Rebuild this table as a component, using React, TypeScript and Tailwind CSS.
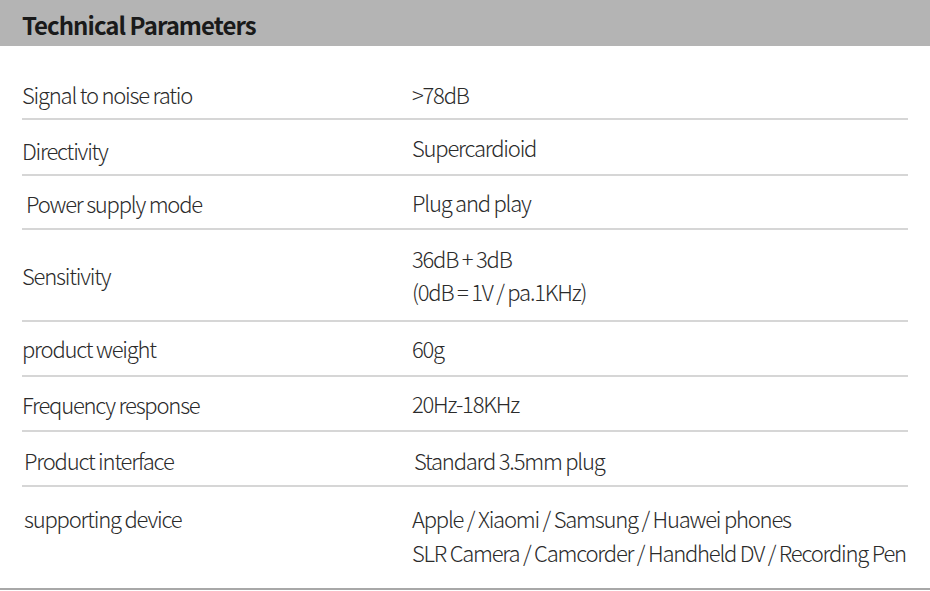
const rows: { label: string; value: string[]; h: string; top?: boolean; lx?: string; vx?: string }[] = [
  { label: "Signal to noise ratio", value: [">78dB"], h: "h-[74px]", top: true },
  { label: "Directivity", value: ["Supercardioid"], h: "h-[56px]", lx: "pt-[6px]" },
  { label: "Power supply mode", value: ["Plug and play"], h: "h-[54px]", lx: "pl-[4px] pt-[2px]" },
  { label: "Sensitivity", value: ["36dB + 3dB", "(0dB = 1V / pa.1KHz)"], h: "h-[92px]" },
  { label: "product weight", value: ["60g"], h: "h-[55px]" },
  { label: "Frequency response", value: ["20Hz-18KHz"], h: "h-[55px]", lx: "pt-[2px]" },
  { label: "Product interface", value: ["Standard 3.5mm plug"], h: "h-[55px]", lx: "pl-[2px] pt-[4px]", vx: "pl-[2px] pt-[4px]" },
];

export default function App() {
  return (
    <div
      className="w-[930px] h-[591px] bg-white text-[#2b2b2b] font-light overflow-hidden"
      style={{ fontFamily: '"Noto Sans CJK SC", "Noto Sans", sans-serif' }}
    >
      {/* header */}
      <div className="h-[46px] bg-[#b4b4b4] flex items-center pl-[22px] pt-[4px]">
        <h1 className="text-[24px] font-bold tracking-[-0.04em] text-[#1a1a1a]">Technical Parameters</h1>
      </div>

      <div className="px-[22px]">
        {rows.map((r) => (
          <div
            key={r.label}
            className={`${r.h} flex border-b-2 border-[#d6d6d6] text-[22px] leading-[33px] tracking-[-0.055em] ${
              r.top ? "items-start pt-[32px]" : "items-center"
            }`}
          >
            <div className={`w-[390px] shrink-0 ${r.lx ?? ""}`}>{r.label}</div>
            <div className={r.vx ?? ""}>
              {r.value.map((v) => (
                <div key={v}>{v}</div>
              ))}
            </div>
          </div>
        ))}

        {/* supporting device */}
        <div className="h-[101px] flex items-start pt-[14px] text-[22px] leading-[34px] tracking-[-0.055em]">
          <div className="w-[390px] shrink-0 pl-[2px]">supporting device</div>
          <div>
            <div>Apple / Xiaomi / Samsung / Huawei phones</div>
            <div>SLR Camera / Camcorder / Handheld DV / Recording Pen</div>
          </div>
        </div>
      </div>
      <div className="h-[2px] bg-[#a8a8a8]" />
    </div>
  );
}
